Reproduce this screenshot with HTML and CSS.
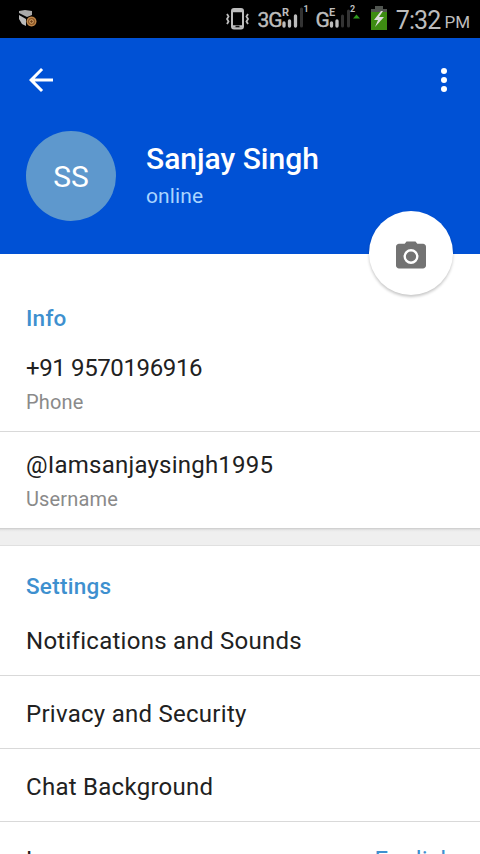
FILE: index.html
```html
<!DOCTYPE html>
<html lang="en">
  <head>
    <meta charset="UTF-8" />
    <meta name="viewport" content="width=device-width, initial-scale=1.0" />
    <title>Settings</title>
    <link rel="stylesheet" href="styles.css">
  </head>
  <body>
    <div class="screen">
      <div class="status-bar">
        <svg class="app-icon" width="20" height="20" viewBox="0 0 20 20">
          <path d="M1 2l6-1 7 1v4l-5 2-8-4z" fill="#aaa" />
          <path d="M1 6l7 4v7l-4-2-3-5z" fill="#bbb" />
          <circle cx="13.500" cy="12.500" r="5" fill="#8a5526" />
          <circle cx="13.500" cy="12.500" r="4.200" fill="none" stroke="#bd8548" stroke-width="1.200" />
          <circle cx="13.500" cy="12.500" r="1.800" fill="#70401a" stroke="#e0b070" />
        </svg>
        <div class="status-right">
          <svg class="vibrate" width="24" height="24" viewBox="0 0 24 24" fill="none" stroke="#bdbdbd">
            <rect x="6" y="2" width="11" height="19.500" rx="2" stroke-width="2" />
            <path d="M7 4h9M7 19.500h9" stroke-width="2.500" />
            <path d="M9.500 19.500h4" stroke="#111" stroke-width="1.500" />
            <path d="M1 7l1.500 2.500L1 12l1.500 2.500L1 17M22 7l-1.500 2.500L22 12l-1.500 2.500L22 17" stroke-width="1.800" />
          </svg>
          <svg class="signal" width="52" height="30" viewBox="0 0 52 30">
            <text class="net" x="-0.500" y="23">3G</text>
            <path d="M26 22v-3M31.500 22v-5M37.500 22v-10" stroke="#bdbdbd" stroke-width="3.300" stroke-linecap="round" />
            <path d="M43.500 22V5" stroke="#333" stroke-width="3" stroke-linecap="round" />
            <text class="roam" x="24" y="12">R</text>
            <text class="sim" x="45.500" y="8">1</text>
          </svg>
          <svg class="signal" width="46" height="30" viewBox="0 0 46 30">
            <text class="net" x="-0.500" y="23">G</text>
            <path d="M15.500 22v-3M21 22v-5" stroke="#bdbdbd" stroke-width="3.300" stroke-linecap="round" />
            <path d="M26.500 22V12M32.500 22V7" stroke="#333" stroke-width="3" stroke-linecap="round" />
            <text class="roam" x="13" y="12">E</text>
            <text class="sim" x="34" y="8">2</text>
            <path d="M37 14.500l3.500-4 3.500 4z" fill="#2f9a1c" />
          </svg>
          <svg class="battery" width="16" height="24" viewBox="0 0 16 24">
            <path d="M4 0h8v3h4v21H0V3h4z" fill="#3d8c12" />
            <path d="M4 0h8v3h4v3H0V3h4z" fill="#505550" />
            <path d="M10 5L3 14h4l-3 7 9-10H8l4-6z" fill="#ddd" />
          </svg>
          <span class="time">7:32</span>
          <span class="ampm">PM</span>
        </div>
      </div>

      <div class="header">
        <div class="toolbar">
          <svg width="36" height="36" viewBox="0 0 24 24" fill="#fff">
            <path d="M20 11H7.830l5.590-5.590L12 4l-8 8 8 8 1.410-1.410L7.830 13H20v-2z" />
          </svg>
          <svg width="36" height="36" viewBox="0 0 24 24" fill="#fff">
            <circle cx="12" cy="6" r="2" />
            <circle cx="12" cy="12" r="2" />
            <circle cx="12" cy="18" r="2" />
          </svg>
        </div>
        <div class="profile">
          <div class="avatar">SS</div>
          <div class="user">
            <div class="name">Sanjay Singh</div>
            <div class="online">online</div>
          </div>
        </div>
        <div class="camera-btn">
          <svg width="36" height="36" viewBox="0 0 24 24">
            <path d="M9 3L7.800 4.500H4c-1.100 0-2 .9-2 2V19c0 1.100.9 2 2 2h16c1.100 0 2-.9 2-2V6.500c0-1.100-.9-2-2-2h-3.800L15 3H9z" fill="#737373" />
            <circle cx="12" cy="13" r="4.200" fill="none" stroke="#fff" stroke-width="1.600" />
          </svg>
        </div>
      </div>

      <div class="section info">
        <h3>Info</h3>
        <div class="info-row">
          <div class="value phone">+91 9570196916</div>
          <div class="label">Phone</div>
        </div>
        <div class="info-row">
          <div class="value">@Iamsanjaysingh1995</div>
          <div class="label">Username</div>
        </div>
      </div>

      <div class="divider"></div>

      <div class="section settings">
        <h3>Settings</h3>
        <div class="row">Notifications and Sounds</div>
        <div class="row">Privacy and Security</div>
        <div class="row">Chat Background</div>
        <div class="row">Language <span class="selected">English</span></div>
      </div>
    </div>
  </body>
</html>
```
FILE: styles.css
```css
* {
  box-sizing: border-box;
}
body {
  margin: 0;
  font-family: Roboto, "Liberation Sans", sans-serif;
  color: #212121;
  background-color: #fff;
}
.screen {
  width: 480px;
  height: 854px;
  overflow: hidden;
}
.status-bar {
  display: flex;
  justify-content: space-between;
  align-items: center;
  height: 38px;
  padding: 0 10px 0 18px;
  background-color: #000;
}
.status-right {
  display: flex;
  align-items: center;
  color: #bdbdbd;
}
.vibrate {
  margin-right: 8px;
}
.signal {
  margin-right: 6px;
  fill: #bdbdbd;
}
.net {
  font-size: 21px;
  letter-spacing: -1px;
  stroke: #bdbdbd;
  stroke-width: 0.4px;
}
.roam {
  font-size: 11px;
  font-weight: 700;
}
.sim {
  font-size: 9px;
  font-weight: 700;
}
.battery {
  margin: 0 9px 2px 3px;
}
.time {
  margin-top: 2px;
  font-size: 25px;
  letter-spacing: -0.9px;
}
.ampm {
  margin: 6px 0 0 4px;
  font-size: 17px;
}
.header {
  position: relative;
  height: 216px;
  background-color: #0051d5;
}
.toolbar {
  display: flex;
  justify-content: space-between;
  align-items: center;
  height: 84px;
  padding: 0 18px 0 23px;
}
.profile {
  display: flex;
  align-items: center;
  gap: 30px;
  padding: 9px 26px 0;
}
.avatar {
  width: 90px;
  height: 90px;
  border-radius: 50%;
  background-color: #5e98cd;
  color: #fff;
  font-size: 30px;
  line-height: 91px;
  text-align: center;
}
.user {
  padding-top: 3px;
}
.name {
  color: #fff;
  font-size: 30px;
  font-weight: 500;
  line-height: 37px;
}
.online {
  color: #a9d5ff;
  font-size: 21px;
  letter-spacing: 0.1px;
  line-height: 38px;
}
.camera-btn {
  position: absolute;
  right: 27px;
  bottom: -41px;
  display: flex;
  justify-content: center;
  align-items: center;
  width: 84px;
  height: 84px;
  padding-top: 4px;
  border-radius: 50%;
  background-color: #fff;
  box-shadow: 0 2px 3px rgba(0, 0, 0, 0.22);
}
h3 {
  margin: 0;
  padding: 0 26px;
  color: #3e90cf;
  font-size: 22.5px;
  font-weight: 500;
  letter-spacing: 0.25px;
  line-height: 30px;
}
.info {
  padding-top: 49px;
}
.info-row {
  height: 97px;
  padding: 17px 26px 0;
  border-bottom: 1px solid #d9d9d9;
}
.info h3 + .info-row {
  height: 99px;
  padding-top: 19px;
}
.info-row:last-child {
  height: 96px;
  border-bottom: none;
}
.value {
  font-size: 24px;
  letter-spacing: 0.22px;
  line-height: 32px;
}
.phone {
  letter-spacing: -0.38px;
}
.label {
  color: #8a8a8a;
  font-size: 20px;
  letter-spacing: 0.15px;
  line-height: 37px;
}
.divider {
  height: 18px;
  border-bottom: 1px solid #e0e0e0;
  background: linear-gradient(#cacaca, #e6e6e6 2px, #efefef 4px);
}
.settings {
  padding-top: 25px;
}
.row {
  display: flex;
  justify-content: space-between;
  height: 73px;
  padding: 0 26px;
  border-bottom: 1px solid #d9d9d9;
  font-size: 24px;
  letter-spacing: 0.27px;
  line-height: 76px;
}
.settings h3 + .row {
  height: 75px;
  line-height: 80px;
}
.selected {
  color: #3e90cf;
}
```
